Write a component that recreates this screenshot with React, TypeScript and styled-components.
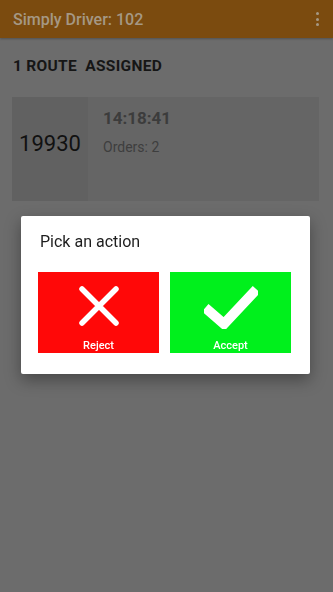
import React from "react";
import styled, { createGlobalStyle } from "styled-components";

const Global = createGlobalStyle`
  html, body { margin: 0; padding: 0; }
  body { background: #6c6c6c; font-family: Roboto, "Liberation Sans", sans-serif; }
`;

const Screen = styled.div`
  width: 333px;
  height: 592px;
  background: #6c6c6c;
  display: flex;
  flex-direction: column;
`;

const AppBar = styled.header`
  height: 38px;
  background: #7b4b0f;
  display: flex;
  align-items: center;
  justify-content: space-between;
  padding: 0 14px 0 13px;
  box-shadow: 0 1px 2px rgba(0,0,0,0.25);
`;

const AppTitle = styled.div`
  color: #a59884;
  font-size: 16px;
  font-weight: 500;
`;

const MenuDots = styled.div`
  display: flex;
  flex-direction: column;
  gap: 2.5px;
  span {
    width: 3px;
    height: 3px;
    background: #a59884;
    border-radius: 50%;
  }
`;

const Content = styled.main`
  padding: 19px 14px 0 12px;
  display: flex;
  flex-direction: column;
`;

const SectionTitle = styled.div`
  padding-left: 1px;
  font-size: 15.5px;
  font-weight: 700;
  color: #161616;
  line-height: 19px;
  letter-spacing: 0.3px;
  white-space: pre;
`;

const RouteCard = styled.div`
  margin-top: 21px;
  height: 104px;
  display: flex;
  background: #656565;
`;

const RouteId = styled.div`
  width: 76px;
  padding-bottom: 12px;
  box-sizing: border-box;
  background: #616161;
  display: flex;
  align-items: center;
  justify-content: center;
  font-size: 22px;
  color: #111;
`;

const RouteInfo = styled.div`
  padding: 11px 0 0 15px;
  display: flex;
  flex-direction: column;
  gap: 11px;
`;

const Time = styled.div`
  font-size: 17px;
  font-weight: 700;
  color: #3c3c3c;
`;

const Orders = styled.div`
  font-size: 14px;
  color: #3e3e3e;
`;

const Overlay = styled.div`
  position: fixed;
  inset: 0;
  display: flex;
  align-items: flex-start;
  justify-content: flex-start;
  padding: 216px 0 0 21px;
`;

const Dialog = styled.div`
  width: 289px;
  background: #fff;
  border-radius: 2px;
  box-shadow: 0 6px 16px rgba(0,0,0,0.35);
  padding: 17px 0 21px 0;
  box-sizing: border-box;
`;

const DialogTitle = styled.div`
  padding-left: 19px;
  font-size: 16px;
  color: #1e1e1e;
  line-height: 18px;
`;

const Actions = styled.div`
  margin-top: 21px;
  padding: 0 19px 0 17px;
  display: grid;
  grid-template-columns: 121px 121px;
  gap: 11px;
`;

const ActionButton = styled.button<{ $bg: string }>`
  height: 81px;
  border: none;
  padding: 0;
  margin: 0;
  background: ${(p) => p.$bg};
  display: flex;
  flex-direction: column;
  align-items: center;
  color: #fff;
  font-family: Roboto, "Liberation Sans", sans-serif;
  font-size: 11px;
  font-weight: 500;
  svg { margin-top: 13px; }
`;

const Label = styled.span`
  margin-top: auto;
  margin-bottom: 0;
  line-height: 14px;
`;

export default function App() {
  return (
    <>
      <Global />
      <Screen>
        <AppBar>
          <AppTitle>Simply Driver: 102</AppTitle>
          <MenuDots>
            <span />
            <span />
            <span />
          </MenuDots>
        </AppBar>
        <Content>
          <SectionTitle>{"1 ROUTE  ASSIGNED"}</SectionTitle>
          <RouteCard>
            <RouteId>19930</RouteId>
            <RouteInfo>
              <Time>14:18:41</Time>
              <Orders>Orders: 2</Orders>
            </RouteInfo>
          </RouteCard>
        </Content>
      </Screen>
      <Overlay>
        <Dialog>
          <DialogTitle>Pick an action</DialogTitle>
          <Actions>
            <ActionButton $bg="#ff0808">
              <svg width="42" height="42" viewBox="0 0 42 42">
                <path d="M4 4 L38 38 M38 4 L4 38" stroke="#fff" strokeWidth="5.5" strokeLinecap="round" fill="none" />
              </svg>
              <Label>Reject</Label>
            </ActionButton>
            <ActionButton $bg="#00f01c">
              <svg width="54" height="44" viewBox="0 0 54 44">
                <path d="M5 26 L20 39 L49 8" stroke="#fff" strokeWidth="10" strokeLinecap="square" strokeLinejoin="miter" fill="none" />
              </svg>
              <Label>Accept</Label>
            </ActionButton>
          </Actions>
        </Dialog>
      </Overlay>
    </>
  );
}
